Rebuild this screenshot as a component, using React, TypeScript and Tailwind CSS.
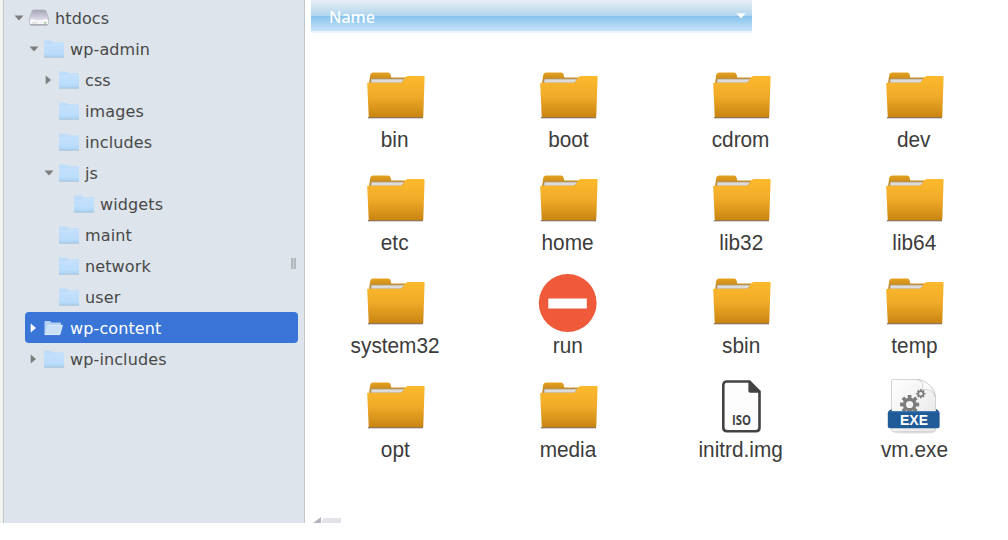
import React from 'react';

type TreeNode = { name: string; depth: number; arrow?: 'down' | 'right'; selected?: boolean; drive?: boolean };

const tree: TreeNode[] = [
  { name: 'htdocs', depth: 0, arrow: 'down', drive: true },
  { name: 'wp-admin', depth: 1, arrow: 'down' },
  { name: 'css', depth: 2, arrow: 'right' },
  { name: 'images', depth: 2 },
  { name: 'includes', depth: 2 },
  { name: 'js', depth: 2, arrow: 'down' },
  { name: 'widgets', depth: 3 },
  { name: 'maint', depth: 2 },
  { name: 'network', depth: 2 },
  { name: 'user', depth: 2 },
  { name: 'wp-content', depth: 1, arrow: 'right', selected: true },
  { name: 'wp-includes', depth: 1, arrow: 'right' },
];

const indents = ['pl-[10px]', 'pl-[25px]', 'pl-10', 'pl-[55px]'];
const selectedIndent = 'ml-[21px] mr-1.5 pl-1';

const files = [
  'bin', 'boot', 'cdrom', 'dev',
  'etc', 'home', 'lib32', 'lib64',
  'system32', 'run', 'sbin', 'temp',
  'opt', 'media', 'initrd.img', 'vm.exe',
];

function Arrow({ dir, light }: { dir?: 'down' | 'right'; light?: boolean }) {
  return (
    <svg width="10" height="12" viewBox="0 0 10 12" className="shrink-0">
      {dir === 'down' && <path d="M0.5 3.5H9.5L5 8.5Z" fill="#7d7d7d" />}
      {dir === 'right' && <path d="M1.7 1.5L7 6L1.7 10.5Z" fill={light ? '#fff' : '#7d7d7d'} />}
    </svg>
  );
}

function TreeIcon({ node }: { node: TreeNode }) {
  if (node.drive) {
    return (
      <svg width="20" height="17" viewBox="0 0 20 17">
        <defs>
          <linearGradient id="driveTop" x1="0" y1="0" x2="0" y2="1">
            <stop offset="0" stopColor="#a7a6b8" />
            <stop offset=".65" stopColor="#dcdbe8" />
          </linearGradient>
        </defs>
        <path d="M5 1H15Q16.5 1 17 2.3L19.5 9.5V14Q19.5 16 17.7 16H2.3Q.5 16 .5 14V9.5L3 2.3Q3.5 1 5 1Z" fill="url(#driveTop)" stroke="#a6a5ae" strokeWidth=".6" />
        <path d="M.8 10.7Q3 9.6 5 10.4Q10 11.4 15 10.4Q17 9.6 19.2 10.7V14Q19.2 15.4 17.6 15.4H2.4Q.8 15.4 .8 14Z" fill="#f6f6f8" />
        <path d="M1.7 15.8H18.3" stroke="#858589" strokeWidth=".8" />
        <path d="M3 13.8H8" stroke="#c8c8cd" strokeWidth=".8" />
        <path d="M15 13.8H17.3" stroke="#7fc368" strokeWidth="1.2" />
      </svg>
    );
  }
  if (node.selected) {
    return (
      <svg width="20" height="17" viewBox="0 0 20 17">
        <path d="M.5 15V3Q.5 2 1.5 2H6L7.5 3.5H16Q17 3.5 17 4.5V7Z" fill="#b3d2f3" />
        <path d="M4 6H18.2Q19.1 6 18.8 7L16.6 15Q16.3 16 15.2 16H.8Q.4 16 .7 15L3 7Q3.2 6 4 6Z" fill="#cae0f8" />
        <path d="M3.2 6.3H18.5M.7 15.6H16" stroke="#e4f2ff" strokeWidth=".6" />
      </svg>
    );
  }
  return (
    <svg width="20" height="18" viewBox="0 0 20 18">
      <defs>
        <linearGradient id="treeFolder" x1="0" y1="0" x2="0" y2="1">
          <stop offset="0" stopColor="#c3dffb" />
          <stop offset=".7" stopColor="#bbddfc" />
          <stop offset="1" stopColor="#acd2f4" />
        </linearGradient>
      </defs>
      <path d="M0 17.5V1.5Q0 .5 1 .5H7.5Q8.5.5 9 2.3H19Q20 2.3 20 3.3V17.5Z" fill="#bdddfb" />
      <path d="M0 5.5H7.8L9.3 4H20V17H0Z" fill="url(#treeFolder)" />
      <path d="M0 5.5H7.8L9.3 4H20" fill="none" stroke="#cbe4fd" strokeWidth=".7" />
      <path d="M0 17.2H20" stroke="#a6bed1" strokeWidth=".8" />
    </svg>
  );
}

function FolderIcon() {
  return (
    <svg width="60" height="50" viewBox="0 0 60 50">
      <defs>
        <linearGradient id="fileFolder" x1="0" y1="0" x2="0" y2="1">
          <stop offset="0" stopColor="#fdba2d" />
          <stop offset=".5" stopColor="#f0aa29" />
          <stop offset="1" stopColor="#c78410" />
        </linearGradient>
        <linearGradient id="folderBack" x1="0" y1="0" x2="0" y2="1">
          <stop offset="0" stopColor="#e5a11f" />
          <stop offset="1" stopColor="#b57c1a" />
        </linearGradient>
      </defs>
      <path d="M3 14L4.2 5Q4.5 2.5 7 2.5H22Q24 2.5 24.6 4.5L25.3 7.5H42V14Z" fill="url(#folderBack)" />
      <path d="M5.2 9H38.5L35.5 13H4.8Z" fill="#dedcdb" stroke="#a5967c" strokeWidth=".7" />
      <path d="M1.2 13.7Q1 12.7 2 12.7H34.2Q36 12.7 37 11L38.8 8Q40 6 42 6H57.5Q58.7 6 58.6 7.2L57.3 46.3Q57.2 47.5 56 47.5H4Q2.8 47.5 2.7 46.3Z" fill="url(#fileFolder)" />
      <path d="M2 47.5H57" stroke="#916f41" strokeWidth="1" />
      <path d="M1.7 48.4H57" stroke="#c5c1c9" strokeWidth=".8" />
    </svg>
  );
}

const gearTeeth = [0, 45, 90, 135];

function Gear({ x, y, r }: { x: number; y: number; r: number }) {
  return (
    <g transform={`translate(${x} ${y})`}>
      {gearTeeth.map((a) => (
        <path key={a} d={`M0 ${-r * 1.4}V${r * 1.4}`} stroke="#7c7c7c" strokeWidth={r * 0.55} transform={`rotate(${a})`} />
      ))}
      <circle r={r} fill="#7c7c7c" />
      <circle r={r * 0.53} fill="#f2f2f2" />
    </g>
  );
}

function FileIcon({ name }: { name: string }) {
  if (name === 'run') {
    return (
      <svg width="60" height="60" viewBox="0 0 60 60">
        <circle cx="29.7" cy="30" r="28.9" fill="#ee5a3a" />
        <rect x="10.3" y="25.5" width="38.5" height="10" fill="#fff" />
      </svg>
    );
  }
  if (name === 'initrd.img') {
    return (
      <svg width="60" height="56" viewBox="0 0 60 56">
        <path d="M16 2.5H38.5L48.5 12.5V48.5Q48.5 52.2 45 52.2H16Q12.3 52.2 12.3 48.5V6Q12.3 2.5 16 2.5Z" fill="#fdfdfd" stroke="#434343" strokeWidth="2.6" />
        <path d="M37.4 1.5L49.7 13.8H39.3Q37.4 13.8 37.4 12Z" fill="#434343" />
        <text x="30.4" y="46.2" textAnchor="middle" fontFamily="Open Sans, sans-serif" fontWeight="700" fontSize="13.5" fill="#434343" textLength="19" lengthAdjust="spacingAndGlyphs">ISO</text>
      </svg>
    );
  }
  if (name === 'vm.exe') {
    return (
      <svg width="60" height="58" viewBox="0 0 60 58">
        <defs>
          <linearGradient id="page" x1="0" y1="0" x2="1" y2="1">
            <stop offset="0" stopColor="#fff" />
            <stop offset="1" stopColor="#e6e6e6" />
          </linearGradient>
        </defs>
        <ellipse cx="30" cy="54.3" rx="21" ry="1.3" fill="#e0e0e0" />
        <path d="M8.5 1.5H35Q51.5 7 51.5 20V52Q51.5 53.7 49.5 53.7H10Q7.5 53.7 7.5 51.5V3Q7.5 1.5 8.5 1.5Z" fill="url(#page)" stroke="#c9c9c9" strokeWidth=".8" />
        <path d="M33 1.5C42 3 38 12 38 12C45 10 51 14 51.5 19C49 7 41 2 33 1.5Z" fill="#fafafa" stroke="#c4c4c4" strokeWidth=".7" />
        <Gear x={25.6} y={26.5} r={6.8} />
        <Gear x={36.8} y={15.7} r={3.3} />
        <path d="M4 33.5L7.5 31V35M55.5 33.5L52 31V35" fill="#174b7a" />
        <rect x="3.8" y="33.2" width="51.8" height="17" rx="2" fill="#205b98" />
        <path d="M5 33.8H54.5" stroke="#3879b5" strokeWidth=".8" />
        <text x="30" y="46.7" textAnchor="middle" fontFamily="Liberation Sans, sans-serif" fontWeight="700" fontSize="14.5" fill="#fff" textLength="28" lengthAdjust="spacingAndGlyphs">EXE</text>
      </svg>
    );
  }
  return <FolderIcon />;
}

const iconPadding: Record<string, string> = { run: 'pt-0', 'initrd.img': 'pt-[3px]', 'vm.exe': 'pt-[2px]' };

export default function App() {
  return (
    <div className="flex h-[540px] w-[1008px] overflow-hidden bg-white">
      <aside className="flex h-[523px] w-[305px] shrink-0 border-r border-[#c3c6ca] bg-[#dde4eb]">
        <div className="w-1 shrink-0 border-r border-[#c3c3c3] bg-[#f2f2f2]" />
        <div className="relative w-[300px] pt-0.5 font-['DejaVu_Sans',sans-serif] text-base text-[#484848]">
          {tree.map((node) => (
            <div
              key={node.name}
              className={`flex h-[31px] items-center ${node.selected ? `${selectedIndent} rounded-[4px] bg-[#3875d7] text-white` : indents[node.depth]}`}
            >
              <Arrow dir={node.arrow} light={node.selected} />
              <span className="ml-[5px] flex w-5 shrink-0 justify-center"><TreeIcon node={node} /></span>
              <span className="ml-1.5 pt-[2px] text-[16px] leading-none tracking-[0.12px] whitespace-nowrap">{node.name}</span>
            </div>
          ))}
          <div className="absolute top-[258px] right-2 h-[11px] w-[5px] border-x-2 border-[#b3b8bc] bg-[#ccd1d6]" />
        </div>
      </aside>
      <main className="flex w-[703px] flex-col">
        <header className="ml-1.5 flex h-[33px] w-[441px] shrink-0 items-center justify-between border-b-2 border-[#ecf4ff] bg-[linear-gradient(180deg,#e9f0fa_0px,#dbe8f0_4px,#b0d5ef_16px,#85c2ec_16px,#c9e5fa_31px)] pr-1.5 pl-[18px]">
          <span className="pt-[2px] font-['Noto_Sans',sans-serif] text-[16px] leading-none font-medium text-white">Name</span>
          <svg width="10" height="6" viewBox="0 0 10 6"><path d="M.3.3H9.7L5 5.5Z" fill="#fff" /></svg>
        </header>
        <div className="mt-[33px] ml-[3.5px] grid h-[413.6px] w-[692px] shrink-0 grid-cols-4 grid-rows-4">
          {files.map((name) => (
            <div key={name} className="flex flex-col items-center">
              <div className={`flex h-[60px] shrink-0 justify-center ${iconPadding[name] ?? 'pt-[3.5px] pl-px'}`}><FileIcon name={name} /></div>
              <span className="mt-[1.5px] inline-block scale-x-[0.945] font-['Liberation_Sans',sans-serif] text-[22px] leading-6 text-[#3c3c3c]">{name}</span>
            </div>
          ))}
        </div>
        <svg className="mt-[37px] ml-2 shrink-0" width="28" height="6" viewBox="0 0 28 6">
          <path d="M0 6L8 0V6Z" fill="#b6b4c3" />
          <path d="M9 6V3Q10 1 13 1H28V6Z" fill="#e3e2e8" />
        </svg>
      </main>
    </div>
  );
}
